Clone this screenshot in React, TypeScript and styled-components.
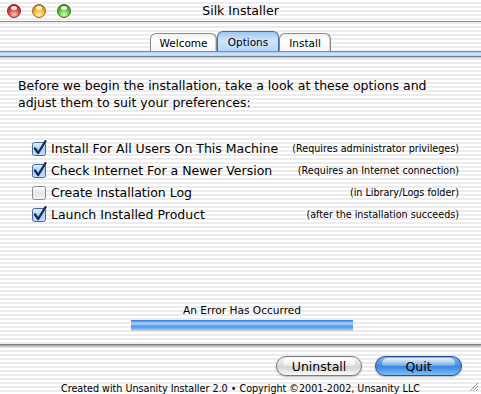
import React from "react";
import styled, { createGlobalStyle } from "styled-components";

const GlobalStyle = createGlobalStyle`
    html, body {
        margin: 0;
        padding: 0;
        background: #fff;
    }
    body {
        font-family: "DejaVu Sans", "Liberation Sans", sans-serif;
        color: #000;
    }
`;

const pinstripe = `repeating-linear-gradient(180deg, #ffffff 0px, #ffffff 2px, #ececec 2px, #ececec 4px)`;

const Window = styled.div`
    position: relative;
    width: 481px;
    height: 394px;
    display: flex;
    flex-direction: column;
    background: ${pinstripe};
    overflow: hidden;
`;

const TitleBar = styled.div`
    height: 21px;
    display: flex;
    align-items: center;
    position: relative;
    border-bottom: 1px solid #8e8e8e;
    box-sizing: content-box;
`;

const Lights = styled.div`
    display: flex;
    gap: 11px;
    padding-left: 7px;
`;

const lightColors = {
    red: ["#ffc7bd", "#e0463a", "#9b130c", "#7a2a25"],
    yellow: ["#fff1b3", "#f4b326", "#b86a06", "#8a6a20"],
    green: ["#d9ffc0", "#5fbf2e", "#2a7a0c", "#3d6a25"],
};

const Light = styled.div<{ $tone: keyof typeof lightColors }>`
    position: relative;
    width: 12px;
    height: 12px;
    border-radius: 50%;
    border: 1px solid ${(p) => lightColors[p.$tone][3]};
    background: radial-gradient(
        circle at 50% 80%,
        ${(p) => lightColors[p.$tone][0]} 0%,
        ${(p) => lightColors[p.$tone][1]} 50%,
        ${(p) => lightColors[p.$tone][2]} 100%
    );

    &::after {
        content: "";
        position: absolute;
        left: 3px;
        top: 1px;
        width: 6px;
        height: 4px;
        border-radius: 50%;
        background: rgba(255, 255, 255, 0.85);
    }
`;

const Title = styled.div`
    position: absolute;
    left: 0;
    right: 0;
    top: 0;
    line-height: 21px;
    text-align: center;
    font-size: 12.5px;
    pointer-events: none;
`;

const TabBar = styled.div`
    display: flex;
    justify-content: center;
    padding-top: 10px;
    height: 19px;
    box-sizing: content-box;
    position: relative;
    z-index: 1;
`;

const Tab = styled.div<{ $active?: boolean; $width: number }>`
    width: ${(p) => p.$width}px;
    height: ${(p) => (p.$active ? 20 : 18)}px;
    margin-top: ${(p) => (p.$active ? -1 : 1)}px;
    box-sizing: border-box;
    display: flex;
    align-items: center;
    justify-content: center;
    font-size: 10.5px;
    border: 1px solid ${(p) => (p.$active ? "#3f6db3" : "#8a8a8a")};
    border-bottom: none;
    border-radius: 6px 6px 0 0;
    background: ${(p) =>
        p.$active
            ? "linear-gradient(180deg, #9cc7f2 0%, #cfe4fb 45%, #b7d6f7 100%)"
            : "linear-gradient(180deg, #f2f2f2 0%, #ffffff 45%, #f4f4f4 100%)"};
    box-shadow: ${(p) => (p.$active ? "none" : "inset -1px 0 0 #cfcfcf")};
`;

const BlueRule = styled.div`
    height: 4px;
    border-top: 1px solid #5b92dc;
    background: linear-gradient(180deg, #a9cdf5 0%, #d2e6fb 60%, #b0d1f5 100%);
    border-bottom: 1px solid #6f7f93;
    box-shadow: 0 1px 0 #c9c9c9;
`;

const Panel = styled.div`
    flex: 1;
    display: flex;
    flex-direction: column;
    border-bottom: 1px solid #808080;
    box-shadow: 0 1px 0 #a8a8a8, 0 2px 2px rgba(0, 0, 0, 0.18);
    padding: 20px 0 14px 0;
`;

const Intro = styled.p`
    margin: 0;
    padding-left: 18px;
    font-size: 12.5px;
    line-height: 17px;
`;

const OptionList = styled.div`
    display: flex;
    flex-direction: column;
    margin-top: 26px;
    padding: 0 22px 0 32px;
`;

const OptionRow = styled.label`
    display: flex;
    align-items: center;
    height: 22px;
`;

const OptionLabel = styled.span`
    font-size: 12.5px;
    margin-left: 3px;
    flex: 1;
`;

const Note = styled.span`
    font-size: 9.6px;
    white-space: nowrap;
`;

const Status = styled.div`
    margin-top: auto;
    padding-left: 3px;
    display: flex;
    flex-direction: column;
    align-items: center;
    gap: 3px;
`;

const StatusText = styled.div`
    font-size: 10.6px;
    line-height: 13px;
`;

const Progress = styled.div`
    width: 222px;
    height: 10px;
    background: linear-gradient(
        180deg,
        #3c7ed8 0%,
        #4f8fe3 12%,
        #a6cdf6 28%,
        #8fc0f3 45%,
        #4f97ea 62%,
        #66abf1 82%,
        #a8d0f8 100%
    );
    box-shadow: 0 1px 0 rgba(0, 0, 0, 0.15);
`;

const ButtonRow = styled.div`
    display: flex;
    justify-content: flex-end;
    gap: 13px;
    padding: 11px 19px 0 0;
`;

const Button = styled.button<{ $primary?: boolean; $width: number }>`
    position: relative;
    width: ${(p) => p.$width}px;
    height: 20px;
    padding: 0;
    border-radius: 10px;
    font-family: "DejaVu Sans", "Liberation Sans", sans-serif;
    font-size: 12.5px;
    color: #000;
    border: 1px solid ${(p) => (p.$primary ? "#24509a" : "#7c7c7c")};
    background: ${(p) =>
        p.$primary
            ? "linear-gradient(180deg, #7fb6f0 0%, #4a90e4 45%, #3f88e0 55%, #79c0fa 100%)"
            : "linear-gradient(180deg, #f4f4f4 0%, #dcdcdc 45%, #d2d2d2 55%, #fbfbfb 100%)"};
    box-shadow: 0 1px 2px rgba(0, 0, 0, 0.3);
    overflow: hidden;

    &::before {
        content: "";
        position: absolute;
        left: 6px;
        right: 6px;
        top: 1px;
        height: 8px;
        border-radius: 6px 6px 3px 3px;
        background: ${(p) =>
            p.$primary
                ? "linear-gradient(180deg, rgba(255,255,255,0.85), rgba(255,255,255,0.2))"
                : "linear-gradient(180deg, rgba(255,255,255,1), rgba(255,255,255,0.4))"};
    }

    span {
        position: relative;
    }
`;

const Footer = styled.div`
    text-align: center;
    font-size: 9.6px;
    padding-top: 7px;
`;

const Grip = styled.svg`
    position: absolute;
    right: 2px;
    bottom: 2px;
`;

const Checkbox = ({ checked }: { checked: boolean }) => (
    <svg width="16" height="16" viewBox="0 0 16 16">
        <defs>
            <linearGradient id={checked ? "cbOn" : "cbOff"} x1="0" y1="0" x2="0" y2="1">
                <stop offset="0" stopColor={checked ? "#e3f0fd" : "#ffffff"} />
                <stop offset="0.5" stopColor={checked ? "#a9cff5" : "#e6e6e6"} />
                <stop offset="1" stopColor={checked ? "#c6e1fb" : "#f2f2f2"} />
            </linearGradient>
        </defs>
        <rect
            x="0.5"
            y="2.5"
            width="13"
            height="13"
            rx="2"
            fill={`url(#${checked ? "cbOn" : "cbOff"})`}
            stroke={checked ? "#4a6a9a" : "#8d8d8d"}
        />
        {checked && (
            <path
                d="M3 8.5 L6.2 13 L13.5 1.2"
                fill="none"
                stroke="#1b2a55"
                strokeWidth="2.3"
                strokeLinecap="round"
                strokeLinejoin="round"
            />
        )}
    </svg>
);

const options = [
    { label: "Install For All Users On This Machine", note: "(Requires administrator privileges)", checked: true },
    { label: "Check Internet For a Newer Version", note: "(Requires an Internet connection)", checked: true },
    { label: "Create Installation Log", note: "(in Library/Logs folder)", checked: false },
    { label: "Launch Installed Product", note: "(after the installation succeeds)", checked: true },
];

export default function App() {
    return (
        <>
            <GlobalStyle />
            <Window>
                <TitleBar>
                    <Lights>
                        <Light $tone="red" />
                        <Light $tone="yellow" />
                        <Light $tone="green" />
                    </Lights>
                    <Title>Silk Installer</Title>
                </TitleBar>
                <TabBar>
                    <Tab $width={67}>Welcome</Tab>
                    <Tab $width={62} $active>
                        Options
                    </Tab>
                    <Tab $width={52}>Install</Tab>
                </TabBar>
                <BlueRule />
                <Panel>
                    <Intro>
                        Before we begin the installation, take a look at these options and
                        <br />
                        adjust them to suit your preferences:
                    </Intro>
                    <OptionList>
                        {options.map((o) => (
                            <OptionRow key={o.label}>
                                <Checkbox checked={o.checked} />
                                <OptionLabel>{o.label}</OptionLabel>
                                <Note>{o.note}</Note>
                            </OptionRow>
                        ))}
                    </OptionList>
                    <Status>
                        <StatusText>An Error Has Occurred</StatusText>
                        <Progress />
                    </Status>
                </Panel>
                <ButtonRow>
                    <Button $width={86}>
                        <span>Uninstall</span>
                    </Button>
                    <Button $width={87} $primary>
                        <span>Quit</span>
                    </Button>
                </ButtonRow>
                <Footer>Created with Unsanity Installer 2.0 • Copyright ©2001-2002, Unsanity LLC</Footer>
                <Grip width="11" height="11" viewBox="0 0 11 11">
                    <path d="M10 2 L2 10 M10 5 L5 10 M10 8 L8 10" stroke="#8a8a8a" strokeWidth="1" />
                    <path d="M10 3 L3 10 M10 6 L6 10 M10 9 L9 10" stroke="#ffffff" strokeWidth="1" />
                </Grip>
            </Window>
        </>
    );
}
